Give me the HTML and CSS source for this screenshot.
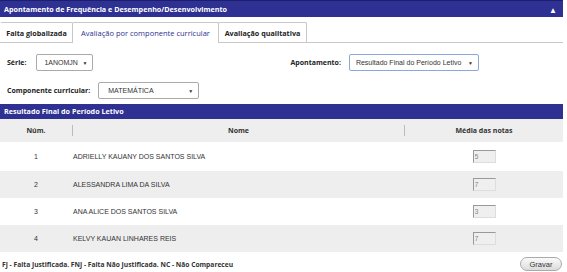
FILE: index.html
```html
<!DOCTYPE html>
<html lang="pt-BR">

<head>
    <meta charset="UTF-8" />
    <title>Apontamento de Frequência e Desempenho/Desenvolvimento</title>
    <link rel="stylesheet" href="styles.css">
</head>

<body>
    <div class="painel">
        <div class="titulo">
            <span>Apontamento de Frequência e Desempenho/Desenvolvimento</span>
            <span class="seta">&#9650;</span>
        </div>

        <ul class="abas">
            <li class="primeira">Falta globalizada</li>
            <li class="ativa">Avaliação por componente curricular</li>
            <li class="terceira">Avaliação qualitativa</li>
        </ul>

        <div class="filtros">
            <div class="linha">
                <div class="campo">
                    <label class="lbl-serie">Série:</label>
                    <div class="select serie">1ANOMJN <span class="caret">&#9660;</span></div>
                </div>
                <div class="campo apont">
                    <label>Apontamento:</label>
                    <div class="select foco">Resultado Final do Período Letivo <span class="caret">&#9660;</span></div>
                </div>
            </div>
            <div class="linha">
                <div class="campo">
                    <label>Componente curricular:</label>
                    <div class="select comp">MATEMÁTICA <span class="caret">&#9660;</span></div>
                </div>
            </div>
        </div>

        <div class="secao">Resultado Final do Período Letivo</div>

        <table class="notas">
            <thead>
                <tr>
                    <th class="num">Núm.</th>
                    <th class="nome"><span>Nome</span></th>
                    <th class="media">Média das notas</th>
                </tr>
            </thead>
            <tbody>
                <tr>
                    <td class="num">1</td>
                    <td>ADRIELLY KAUANY DOS SANTOS SILVA</td>
                    <td class="media"><input type="text" value="5" disabled></td>
                </tr>
                <tr>
                    <td class="num">2</td>
                    <td>ALESSANDRA LIMA DA SILVA</td>
                    <td class="media"><input type="text" value="7" disabled></td>
                </tr>
                <tr>
                    <td class="num">3</td>
                    <td>ANA ALICE DOS SANTOS SILVA</td>
                    <td class="media"><input type="text" value="3" disabled></td>
                </tr>
                <tr>
                    <td class="num">4</td>
                    <td>KELVY KAUAN LINHARES REIS</td>
                    <td class="media"><input type="text" value="7" disabled></td>
                </tr>
            </tbody>
        </table>

        <div class="rodape">
            <p>FJ - Falta Justificada. FNJ - Falta Não Justificada. NC - Não Compareceu</p>
            <button type="button">Gravar</button>
        </div>
    </div>
</body>

</html>
```

FILE: styles.css
```css
body {
    margin: 0;
    background-color: white;
    font-family: 'Open Sans', sans-serif;
    font-size: 7px;
    color: #222;
}

.painel {
    width: 563px;
}

.titulo {
    background-color: #2e3192;
    border-top: 1px solid #1c1f6e;
    color: white;
    font-weight: bold;
    font-size: 7.2px;
    height: 16px;
    padding: 0 6px 0 4px;
    display: flex;
    align-items: center;
    justify-content: space-between;
}

.seta {
    font-size: 8px;
}

.abas {
    list-style: none;
    margin: 5px 0 0 0;
    padding: 0;
    display: flex;
    border-bottom: 1px solid #c8c8c8;
    height: 20px;
}

.abas li {
    box-sizing: border-box;
    border: 1px solid #c8c8c8;
    border-bottom: none;
    border-radius: 2px 2px 0 0;
    margin-right: -1px;
    font-weight: bold;
    font-size: 7.2px;
    display: flex;
    align-items: center;
    justify-content: center;
    background-color: white;
}

.abas li.primeira {
    width: 73px;
    border-left-color: transparent;
}

.abas li.ativa {
    width: 147px;
    height: 21px;
    font-weight: normal;
    font-size: 7.5px;
    color: #2e3192;
}

.abas li.terceira {
    width: 89px;
}

.filtros {
    padding: 11px 0 0 7px;
}

.linha {
    display: flex;
    height: 17px;
    margin-bottom: 11px;
}

.campo {
    display: flex;
    align-items: center;
}

.campo label {
    font-weight: bold;
    font-size: 7px;
    margin-right: 8px;
}

.campo .lbl-serie {
    margin-right: 10px;
}

.apont {
    margin-left: 197px;
}

.select {
    box-sizing: border-box;
    height: 17px;
    border: 1px solid #aaa;
    border-radius: 2px;
    font-family: 'Liberation Sans', Arial, sans-serif;
    font-size: 7px;
    color: #333;
    white-space: nowrap;
    display: flex;
    align-items: center;
    justify-content: space-between;
    padding: 0 5px 0 7px;
}

.caret {
    font-size: 5px;
    color: #333;
}

.serie {
    width: 57px;
}

.comp {
    width: 101px;
    padding-left: 9px;
}

.foco {
    width: 130px;
    border-color: #8aa8d8;
    padding-left: 6px;
}

.secao {
    background-color: #2e3192;
    color: white;
    font-weight: bold;
    font-size: 7.2px;
    height: 15px;
    line-height: 15px;
    padding-left: 4px;
    margin-top: -6px;
}

.notas {
    width: 100%;
    border-collapse: collapse;
    font-family: 'Liberation Sans', Arial, sans-serif;
    font-size: 7px;
    color: #333;
}

.notas th {
    background-color: #eeeeee;
    font-family: 'Open Sans', sans-serif;
    font-weight: bold;
    font-size: 7px;
    height: 23px;
    padding: 0;
}

.notas th.nome span {
    display: block;
    border-left: 1px solid #bbb;
    border-right: 1px solid #bbb;
    height: 11px;
    line-height: 11px;
}

.notas td {
    height: 27px;
    padding: 0;
}

.notas tbody tr:first-child td {
    height: 29px;
}

.notas tbody tr:nth-child(even) td {
    background-color: #eeeeee;
}

.notas .num {
    width: 72px;
    text-align: center;
}

.notas td:nth-child(2) {
    padding-left: 1px;
}

.notas .media {
    width: 158px;
    text-align: center;
}

.media input {
    width: 23px;
    height: 13px;
    box-sizing: border-box;
    border: 1px solid #ddd;
    border-top-color: #999;
    border-left-color: #999;
    background-color: #efefef;
    font-family: 'Liberation Sans', Arial, sans-serif;
    font-size: 7px;
    color: #888;
    padding: 0 1px;
    vertical-align: middle;
}

.rodape {
    display: flex;
    justify-content: space-between;
    align-items: center;
    padding: 5px 1px 0 2px;
}

.rodape p {
    margin: 0;
    font-weight: bold;
    font-size: 6.7px;
    color: #333;
}

.rodape button {
    font-family: 'Liberation Sans', Arial, sans-serif;
    font-size: 7.5px;
    color: #333;
    border: 1px solid #aaa;
    border-radius: 8px;
    background: linear-gradient(#fafafa, #dcdcdc);
    width: 42px;
    height: 14px;
    padding: 0;
}
```
